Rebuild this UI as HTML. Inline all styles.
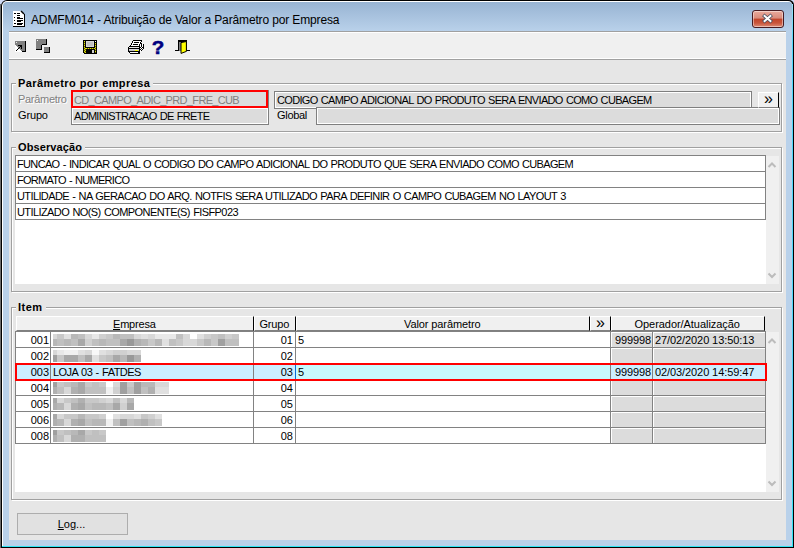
<!DOCTYPE html>
<html lang="pt-BR">
<head>
<meta charset="utf-8">
<title>ADMFM014 - Atribuição de Valor a Parâmetro por Empresa</title>
<style>
html,body{margin:0;padding:0;}
body{width:794px;height:548px;overflow:hidden;background:#d0dbf6;font-family:"Liberation Sans",sans-serif;font-size:11px;color:#000;position:relative;}
div{box-sizing:border-box;}
#win{position:absolute;left:0;top:0;width:794px;height:548px;overflow:hidden;}
#frame{position:absolute;left:1px;top:0;width:793px;height:548px;background:#000;border-radius:6px 5px 0 0;}
#frame2{position:absolute;left:2px;top:1px;width:790px;height:546px;background:#fff;border-radius:5px 4px 0 0;}
#frame3{position:absolute;left:3px;top:2px;width:789px;height:544px;border-radius:4px 3px 0 0;background:linear-gradient(to bottom,#98b4d3 0px,#b9d1ea 29px,#b9d1ea 100%);}
#cy-r{position:absolute;left:792px;top:4px;width:1px;height:543px;background:linear-gradient(to bottom,#9ee2f8 0,#4fd8fb 40px,#4fd8fb 400px,#2ee4f4 100%);}
#cy-b{position:absolute;left:2px;top:546px;width:791px;height:1px;background:#2ee4f4;}
#lgray{position:absolute;left:0;top:4px;width:1px;height:544px;background:#6c6c6c;}
#title{position:absolute;left:31px;top:12px;font-size:12px;line-height:16px;white-space:nowrap;color:#000;letter-spacing:-0.14px;}
#close{position:absolute;left:752px;top:10px;width:32px;height:18px;border:1px solid #471b21;border-radius:3px;background:linear-gradient(to bottom,#e9aa9c 0%,#d98b7b 45%,#c1442a 50%,#c9553b 75%,#dc8b76 100%);box-shadow:inset 0 0 0 1px rgba(255,255,255,.45);}
#client{position:absolute;left:9px;top:31px;width:777px;height:509px;background:#e6e6e6;}
#tb{position:absolute;left:0;top:0;width:777px;height:29px;background:#f0f0f0;border-top:1px solid #a0a0a0;border-bottom:1px solid #a0a0a0;}
#tb:before{content:"";position:absolute;left:0;top:0;width:100%;height:1px;background:#fff;}
#tb:after{content:"";position:absolute;left:0;bottom:0;width:100%;height:1px;background:#fff;}
.gb{position:absolute;border:1px solid #a0a0a0;box-shadow:inset 1px 1px 0 #fff,1px 1px 0 #fff;}
.gbt{position:absolute;padding:0 0 0 2px;background:#e6e6e6;font-weight:bold;font-size:11px;line-height:13px;white-space:nowrap;}
.lbl{position:absolute;white-space:nowrap;line-height:13px;font-size:11px;}
.fld{position:absolute;background:#dcdcdc;border:1px solid #7f7f7f;white-space:nowrap;line-height:13px;font-size:11px;overflow:hidden;box-shadow:inset 0 0 0 1px #fff;}
.fld span{position:absolute;left:2px;top:2px;}
.red{position:absolute;border:2px solid #f00;}
svg{position:absolute;overflow:visible;}
#q{position:absolute;left:152px;top:37px;width:12px;text-align:center;font-weight:bold;font-size:19px;line-height:22px;color:#000080;-webkit-text-stroke:0.5px #000080;transform:scaleX(1.08);}
.dis{color:#808080;text-shadow:1px 1px 0 #fff;}
.btn3d{position:absolute;background:#f0f0f0;border:1px solid;border-color:#fff #000 #808080 #fff;text-align:center;}
.btn3d span{position:absolute;left:0;right:0;top:-2px;font-size:16px;line-height:16px;}
.white{position:absolute;background:#fff;}
.sb{position:absolute;background:#f0f0f0;}
.orow{position:absolute;border:1px solid #828282;background:#fff;white-space:nowrap;line-height:13px;}
.orow span{position:absolute;left:1px;top:2px;}
.hd{position:absolute;background:#f0f0f0;border:1px solid;border-color:#fff #000 #808080 #fff;text-align:center;white-space:nowrap;line-height:13px;}
.hd span{position:absolute;top:1px;}
.hd.ch span{font-size:16px;line-height:16px;top:-2px;left:0;right:0;}
.row{position:absolute;left:15px;width:751px;height:17px;border:1px solid #828282;background:#fff;}
.row .c{position:absolute;top:0;height:15px;white-space:nowrap;line-height:13px;border-left:1px solid #828282;}
.row .c span{position:absolute;top:2px;}
.row .c i{position:absolute;display:block;}
.c1{left:-1px;width:36px;border-left:none !important;}
.c1 span{right:2px;}
.c2{left:34px;width:204px;}
.c2 span{left:2px;}
.c3{left:237px;width:43px;}
.c3 span{right:3px;}
.c4{left:279px;width:316px;}
.c4 span{left:2px;}
.c5{left:594px;width:43px;background:#dcdcdc;box-shadow:inset 1px 1px 0 #fff;}
.c5 span{left:4px;}
.c6{left:636px;width:113px;background:#dcdcdc;box-shadow:inset 1px 1px 0 #fff;}
.c6 span{left:2px;}
.row.sel{background:#cceeff;}
.row.sel .c4{background:#c8f9fd;border-left-color:#0a6cd6;}
.row.sel .c5,.row.sel .c6{background:#cceeff;box-shadow:none;}
#redrow{position:absolute;left:15px;top:363px;width:752px;height:18px;border:2px solid #f00;}
#logbtn{position:absolute;left:17px;top:513px;width:111px;height:22px;border:1px solid #adadad;background:#e1e1e1;text-align:center;line-height:13px;}
#logbtn span{position:absolute;left:0;right:2px;top:4px;font-size:11px;}
</style>
</head>
<body>
<div id="win">
<div id="frame"></div><div id="frame2"></div><div id="frame3"></div>
<div id="lgray"></div><div id="cy-r"></div><div id="cy-b"></div>
<div id="title">ADMFM014 - Atribuição de Valor a Parâmetro por Empresa</div>
<div id="close"></div>
<div id="client"><div id="tb"></div></div>
<svg id="ticon" style="left:13px;top:11px" width="12" height="16" shape-rendering="crispEdges"><path d="M0 0H8L11 3V15H0Z" fill="#fff"/><path d="M8 0L11 3" stroke="#000" stroke-width="1.4" shape-rendering="auto"/><rect x="11" y="3" width="1" height="13" fill="#000"/><rect x="0" y="15" width="12" height="1" fill="#000"/><rect x="1" y="2" width="2" height="1" fill="#000"/><rect x="4" y="2" width="3" height="1" fill="#000"/><rect x="4" y="4" width="3" height="1" fill="#000"/><rect x="1" y="6" width="1" height="1" fill="#000"/><rect x="4" y="6" width="3" height="1" fill="#000"/><rect x="4" y="7" width="6" height="1" fill="#000"/><rect x="1" y="9" width="1" height="1" fill="#000"/><rect x="4" y="9" width="6" height="1" fill="#000"/><rect x="4" y="10" width="4" height="1" fill="#000"/><rect x="1" y="12" width="2" height="1" fill="#000"/><rect x="4" y="12" width="6" height="1" fill="#000"/><rect x="4" y="13" width="5" height="1" fill="#000"/></svg>
<svg style="left:762px;top:14px" width="11" height="9"><path d="M2.6 2L8.4 7M8.4 2L2.6 7" stroke="#4a4f60" stroke-width="3.6" stroke-linecap="square"/><path d="M2.6 2L8.4 7M8.4 2L2.6 7" stroke="#fff" stroke-width="2" stroke-linecap="square"/></svg>
<svg style="left:15px;top:41px" width="12" height="12" shape-rendering="crispEdges"><rect x="0" y="0" width="11" height="11" fill="#808080"/><rect x="10" y="0" width="1" height="11" fill="#000"/><rect x="3" y="10" width="8" height="1" fill="#000"/><path d="M0 4L7 11H0Z" fill="#fff"/><rect x="1" y="1" width="1" height="1" fill="#e8e8e8"/><rect x="3" y="4" width="4" height="1" fill="#000"/><rect x="6" y="4" width="1" height="4" fill="#000"/><rect x="5" y="5" width="1" height="1" fill="#000"/><rect x="4" y="6" width="1" height="1" fill="#000"/><rect x="3" y="7" width="1" height="1" fill="#000"/><rect x="2" y="8" width="1" height="1" fill="#000"/><rect x="1" y="9" width="1" height="1" fill="#000"/></svg>
<svg style="left:36px;top:39px" width="16" height="15" shape-rendering="crispEdges"><path d="M0 0H11V6H6V11H0Z" fill="#808080"/><rect x="10" y="0" width="1" height="6" fill="#000"/><rect x="6" y="5" width="5" height="1" fill="#000"/><rect x="5" y="6" width="1" height="5" fill="#000"/><rect x="0" y="10" width="6" height="1" fill="#000"/><rect x="1" y="1" width="1" height="1" fill="#fff"/><rect x="8" y="8" width="6" height="6" fill="#808080"/><rect x="13" y="8" width="1" height="6" fill="#000"/><rect x="8" y="13" width="6" height="1" fill="#000"/></svg>
<svg style="left:83px;top:40px" width="14" height="14" shape-rendering="crispEdges"><path d="M0 0H14V14H1L0 13Z" fill="#000"/><rect x="1" y="1" width="1" height="12" fill="#5c5c00"/><rect x="12" y="3" width="1" height="10" fill="#5c5c00"/><rect x="2" y="8" width="10" height="1" fill="#5c5c00"/><rect x="2" y="8" width="1" height="5" fill="#5c5c00"/><rect x="1" y="1" width="1" height="1" fill="#e0e000"/><rect x="1" y="3" width="1" height="1" fill="#e0e000"/><rect x="1" y="5" width="1" height="1" fill="#e0e000"/><rect x="1" y="7" width="1" height="1" fill="#e0e000"/><rect x="1" y="9" width="1" height="1" fill="#e0e000"/><rect x="1" y="11" width="1" height="1" fill="#e0e000"/><rect x="12" y="3" width="1" height="1" fill="#e0e000"/><rect x="12" y="5" width="1" height="1" fill="#e0e000"/><rect x="12" y="7" width="1" height="1" fill="#e0e000"/><rect x="12" y="9" width="1" height="1" fill="#e0e000"/><rect x="12" y="11" width="1" height="1" fill="#e0e000"/><rect x="3" y="8" width="1" height="1" fill="#e0e000"/><rect x="5" y="8" width="1" height="1" fill="#e0e000"/><rect x="7" y="8" width="1" height="1" fill="#e0e000"/><rect x="9" y="8" width="1" height="1" fill="#e0e000"/><rect x="11" y="8" width="1" height="1" fill="#e0e000"/><rect x="2" y="8" width="1" height="1" fill="#e0e000"/><rect x="2" y="10" width="1" height="1" fill="#e0e000"/><rect x="2" y="12" width="1" height="1" fill="#e0e000"/><rect x="3" y="1" width="8" height="6" fill="#c0c0c0"/><rect x="3" y="1" width="8" height="1" fill="#d6d6d6"/><rect x="3" y="1" width="1" height="6" fill="#d6d6d6"/><rect x="10" y="1" width="1" height="6" fill="#d6d6d6"/><rect x="3" y="6" width="8" height="1" fill="#d6d6d6"/><rect x="12" y="1" width="1" height="1" fill="#fff"/><rect x="9" y="10" width="2" height="3" fill="#d0d0d0"/></svg>
<svg style="left:128px;top:40px" width="16" height="14" shape-rendering="crispEdges"><rect x="5" y="0" width="9" height="1" fill="#000"/><rect x="4" y="1" width="1" height="1" fill="#000"/><rect x="5" y="1" width="8" height="1" fill="#fff"/><rect x="13" y="1" width="1" height="1" fill="#000"/><rect x="4" y="2" width="1" height="1" fill="#000"/><rect x="5" y="2" width="1" height="1" fill="#fff"/><rect x="6" y="2" width="5" height="1" fill="#000"/><rect x="11" y="2" width="1" height="1" fill="#fff"/><rect x="12" y="2" width="1" height="1" fill="#000"/><rect x="3" y="3" width="1" height="1" fill="#000"/><rect x="4" y="3" width="8" height="1" fill="#fff"/><rect x="12" y="3" width="2" height="1" fill="#000"/><rect x="14" y="3" width="1" height="1" fill="#fff"/><rect x="3" y="4" width="1" height="1" fill="#000"/><rect x="4" y="4" width="1" height="1" fill="#fff"/><rect x="5" y="4" width="5" height="1" fill="#000"/><rect x="10" y="4" width="1" height="1" fill="#fff"/><rect x="11" y="4" width="1" height="1" fill="#000"/><rect x="12" y="4" width="1" height="1" fill="#fff"/><rect x="13" y="4" width="1" height="1" fill="#000"/><rect x="14" y="4" width="1" height="1" fill="#fff"/><rect x="15" y="4" width="1" height="1" fill="#000"/><rect x="2" y="5" width="1" height="1" fill="#000"/><rect x="3" y="5" width="8" height="1" fill="#fff"/><rect x="11" y="5" width="1" height="1" fill="#000"/><rect x="12" y="5" width="1" height="1" fill="#fff"/><rect x="13" y="5" width="1" height="1" fill="#000"/><rect x="14" y="5" width="1" height="1" fill="#fff"/><rect x="15" y="5" width="1" height="1" fill="#000"/><rect x="1" y="6" width="11" height="1" fill="#000"/><rect x="12" y="6" width="1" height="1" fill="#fff"/><rect x="13" y="6" width="1" height="1" fill="#000"/><rect x="14" y="6" width="1" height="1" fill="#fff"/><rect x="15" y="6" width="1" height="1" fill="#000"/><rect x="0" y="7" width="1" height="1" fill="#000"/><rect x="1" y="7" width="10" height="1" fill="#e6e6e6"/><rect x="11" y="7" width="2" height="1" fill="#000"/><rect x="13" y="7" width="1" height="1" fill="#fff"/><rect x="14" y="7" width="2" height="1" fill="#000"/><rect x="0" y="8" width="12" height="1" fill="#000"/><rect x="12" y="8" width="1" height="1" fill="#fff"/><rect x="13" y="8" width="1" height="1" fill="#000"/><rect x="14" y="8" width="1" height="1" fill="#fff"/><rect x="15" y="8" width="1" height="1" fill="#000"/><rect x="0" y="9" width="1" height="1" fill="#000"/><rect x="1" y="9" width="10" height="1" fill="#d8d8e0"/><rect x="11" y="9" width="2" height="1" fill="#000"/><rect x="13" y="9" width="1" height="1" fill="#fff"/><rect x="14" y="9" width="1" height="1" fill="#000"/><rect x="0" y="10" width="1" height="1" fill="#000"/><rect x="1" y="10" width="6" height="1" fill="#c0c0c0"/><rect x="7" y="10" width="3" height="1" fill="#ffff00"/><rect x="10" y="10" width="1" height="1" fill="#c0c0c0"/><rect x="11" y="10" width="1" height="1" fill="#000"/><rect x="12" y="10" width="1" height="1" fill="#fff"/><rect x="13" y="10" width="1" height="1" fill="#000"/><rect x="0" y="11" width="12" height="1" fill="#000"/><rect x="12" y="11" width="1" height="1" fill="#fff"/><rect x="1" y="12" width="1" height="1" fill="#000"/><rect x="2" y="12" width="8" height="1" fill="#fff"/><rect x="10" y="12" width="2" height="1" fill="#000"/><rect x="2" y="13" width="10" height="1" fill="#000"/></svg>
<div id="q">?</div>
<svg style="left:175px;top:40px" width="16" height="15" shape-rendering="crispEdges"><rect x="3" y="0" width="9" height="1" fill="#000"/><rect x="3" y="0" width="1" height="11" fill="#000"/><rect x="11" y="0" width="1" height="11" fill="#000"/><rect x="0" y="10" width="4" height="1" fill="#000"/><rect x="11" y="10" width="4" height="1" fill="#000"/><rect x="4" y="1" width="2" height="10" fill="#808080"/><rect x="4" y="1" width="7" height="1" fill="#000"/><path d="M6 2.6L11.4 1.5V11.4L6 13.4Z" fill="#ffff00" stroke="#000" stroke-width="1" shape-rendering="auto"/></svg>
<div class="gb" style="left:11px;top:83px;width:771px;height:49px"></div><div class="gbt" style="left:16px;top:77px;width:137px;letter-spacing:0.42px">Parâmetro por empresa</div>
<div class="gb" style="left:11px;top:147px;width:771px;height:145px"></div><div class="gbt" style="left:16px;top:141px;width:69px;letter-spacing:0.1px">Observação</div>
<div class="gb" style="left:11px;top:307px;width:771px;height:193px"></div><div class="gbt" style="left:16px;top:301px;width:30px;letter-spacing:0.5px">Item</div>
<div class="lbl dis" style="left:18px;top:93px;letter-spacing:-0.3px">Parâmetro</div>
<div class="lbl" style="left:18px;top:109px;letter-spacing:-0.15px">Grupo</div>
<div class="lbl" style="left:277px;top:109px;letter-spacing:-0.3px">Global</div>
<div class="fld" style="left:274px;top:91px;width:478px;height:18px"><span style="letter-spacing:-0.67px;word-spacing:0.8px">CODIGO CAMPO ADICIONAL DO PRODUTO SERA ENVIADO COMO CUBAGEM</span></div>
<div class="fld" style="left:71px;top:90px;width:198px;height:18px;color:#808080"><span style="left:2px;top:3px;letter-spacing:-0.66px">CD_CAMPO_ADIC_PRD_FRE_CUB</span></div>
<div class="fld" style="left:71px;top:107px;width:198px;height:18px"><span style="top:2px;letter-spacing:-0.7px;word-spacing:0.8px">ADMINISTRACAO DE FRETE</span></div>
<div class="red" style="left:71px;top:90px;width:197px;height:18px"></div>
<div class="fld" style="left:316px;top:107px;width:464px;height:18px"></div>
<div class="btn3d" style="left:758px;top:92px;width:21px;height:16px"><span>»</span></div>
<div class="white" style="left:15px;top:155px;width:751px;height:129px"></div>
<div class="sb" style="left:766px;top:156px;width:13px;height:128px"></div>
<div class="orow" style="left:15px;top:155px;width:751px;height:17px"><span style="letter-spacing:-0.653px;word-spacing:0.8px">FUNCAO - INDICAR QUAL O CODIGO DO CAMPO ADICIONAL DO PRODUTO QUE SERA ENVIADO COMO CUBAGEM</span></div>
<div class="orow" style="left:15px;top:171px;width:751px;height:17px"><span style="letter-spacing:-0.724px;word-spacing:0.8px">FORMATO - NUMERICO</span></div>
<div class="orow" style="left:15px;top:187px;width:751px;height:17px"><span style="letter-spacing:-0.606px;word-spacing:0.8px">UTILIDADE - NA GERACAO DO ARQ. NOTFIS SERA UTILIZADO PARA DEFINIR O CAMPO CUBAGEM NO LAYOUT 3</span></div>
<div class="orow" style="left:15px;top:203px;width:751px;height:17px"><span style="letter-spacing:-0.585px;word-spacing:0.8px">UTILIZADO NO(S) COMPONENTE(S) FISFP023</span></div>
<svg style="left:768px;top:161px" width="8" height="8"><path d="M0.5 6L4 2.5L7.5 6" fill="none" stroke="#bcbcbc" stroke-width="2"/></svg>
<svg style="left:768px;top:272px" width="8" height="8"><path d="M0.5 1.5L4 5L7.5 1.5" fill="none" stroke="#bcbcbc" stroke-width="2"/></svg>
<div class="white" style="left:15px;top:331px;width:751px;height:161px"></div>
<div class="sb" style="left:766px;top:332px;width:13px;height:160px"></div>
<svg style="left:768px;top:337px" width="8" height="8"><path d="M0.5 6L4 2.5L7.5 6" fill="none" stroke="#bcbcbc" stroke-width="2"/></svg>
<svg style="left:768px;top:480px" width="8" height="8"><path d="M0.5 1.5L4 5L7.5 1.5" fill="none" stroke="#bcbcbc" stroke-width="2"/></svg>
<div class="hd " style="left:16px;top:316px;width:238px;height:15px"><span style="left:96px;letter-spacing:-0.2px"><u>E</u>mpresa</span></div>
<div class="hd " style="left:254px;top:316px;width:42px;height:15px"><span style="left:4.5px;letter-spacing:-0.2px">Grupo</span></div>
<div class="hd " style="left:296px;top:316px;width:294px;height:15px"><span style="left:107px;letter-spacing:-0.1px">Valor parâmetro</span></div>
<div class="hd ch" style="left:590px;top:316px;width:21px;height:15px"><span style="">»</span></div>
<div class="hd " style="left:611px;top:316px;width:154px;height:15px"><span style="left:22.5px;letter-spacing:-0.05px">Operador/Atualização</span></div>
<div class="row" style="top:331px"><div class="c c1"><span>001</span></div><div class="c c2"><span style="letter-spacing:-0.53px;word-spacing:0.8px"></span><i style="left:2px;top:2px;width:4px;height:5px;background:#d8d8d8"></i><i style="left:2px;top:7px;width:4px;height:7px;background:#b8b8b8"></i><i style="left:6px;top:2px;width:7px;height:5px;background:#c8c8c8"></i><i style="left:6px;top:7px;width:7px;height:7px;background:#c0c0c0"></i><i style="left:13px;top:2px;width:7px;height:5px;background:#e0e0e0"></i><i style="left:13px;top:7px;width:7px;height:7px;background:#b8b8b8"></i><i style="left:20px;top:2px;width:7px;height:5px;background:#b8b8b8"></i><i style="left:20px;top:7px;width:7px;height:7px;background:#c0c0c0"></i><i style="left:27px;top:2px;width:7px;height:5px;background:#c0c0c0"></i><i style="left:27px;top:7px;width:7px;height:7px;background:#a8a8a8"></i><i style="left:34px;top:2px;width:7px;height:5px;background:#d8d8d8"></i><i style="left:34px;top:7px;width:7px;height:7px;background:#d0d0d0"></i><i style="left:41px;top:2px;width:7px;height:5px;background:#e8e8e8"></i><i style="left:41px;top:7px;width:7px;height:7px;background:#c0c0c0"></i><i style="left:48px;top:2px;width:7px;height:5px;background:#d0d0d0"></i><i style="left:48px;top:7px;width:7px;height:7px;background:#b8b8b8"></i><i style="left:55px;top:2px;width:7px;height:5px;background:#c8c8c8"></i><i style="left:55px;top:7px;width:7px;height:7px;background:#c0c0c0"></i><i style="left:62px;top:2px;width:7px;height:5px;background:#b8b8b8"></i><i style="left:62px;top:7px;width:7px;height:7px;background:#c0c0c0"></i><i style="left:69px;top:2px;width:7px;height:5px;background:#c0c0c0"></i><i style="left:69px;top:7px;width:7px;height:7px;background:#a8a8a8"></i><i style="left:76px;top:2px;width:7px;height:5px;background:#c0c0c0"></i><i style="left:76px;top:7px;width:7px;height:7px;background:#989898"></i><i style="left:83px;top:2px;width:7px;height:5px;background:#d8d8d8"></i><i style="left:83px;top:7px;width:7px;height:7px;background:#b0b0b0"></i><i style="left:90px;top:2px;width:7px;height:5px;background:#e0e0e0"></i><i style="left:90px;top:7px;width:7px;height:7px;background:#b8b8b8"></i><i style="left:97px;top:2px;width:7px;height:5px;background:#d8d8d8"></i><i style="left:97px;top:7px;width:7px;height:7px;background:#c8c8c8"></i><i style="left:104px;top:2px;width:7px;height:5px;background:#e8e8e8"></i><i style="left:104px;top:7px;width:7px;height:7px;background:#b8b8b8"></i><i style="left:111px;top:2px;width:7px;height:5px;background:#e8e8e8"></i><i style="left:111px;top:7px;width:7px;height:7px;background:#e0e0e0"></i><i style="left:118px;top:2px;width:7px;height:5px;background:#e8e8e8"></i><i style="left:118px;top:7px;width:7px;height:7px;background:#c0c0c0"></i><i style="left:125px;top:2px;width:7px;height:5px;background:#c0c0c0"></i><i style="left:125px;top:7px;width:7px;height:7px;background:#c8c8c8"></i><i style="left:132px;top:2px;width:7px;height:5px;background:#d8d8d8"></i><i style="left:132px;top:7px;width:7px;height:7px;background:#d8d8d8"></i><i style="left:139px;top:2px;width:7px;height:5px;background:#ffffff"></i><i style="left:139px;top:7px;width:7px;height:7px;background:#d8d8d8"></i><i style="left:146px;top:2px;width:7px;height:5px;background:#e0e0e0"></i><i style="left:146px;top:7px;width:7px;height:7px;background:#c8c8c8"></i><i style="left:153px;top:2px;width:7px;height:5px;background:#d0d0d0"></i><i style="left:153px;top:7px;width:7px;height:7px;background:#b8b8b8"></i><i style="left:160px;top:2px;width:7px;height:5px;background:#c8c8c8"></i><i style="left:160px;top:7px;width:7px;height:7px;background:#c8c8c8"></i><i style="left:167px;top:2px;width:7px;height:5px;background:#c0c0c0"></i><i style="left:167px;top:7px;width:7px;height:7px;background:#a0a0a0"></i><i style="left:174px;top:2px;width:7px;height:5px;background:#d0d0d0"></i><i style="left:174px;top:7px;width:7px;height:7px;background:#c0c0c0"></i><i style="left:181px;top:2px;width:7px;height:5px;background:#c8c8c8"></i><i style="left:181px;top:7px;width:7px;height:7px;background:#c0c0c0"></i></div><div class="c c3"><span>01</span></div><div class="c c4"><span>5</span></div><div class="c c5"><span style="letter-spacing:-0.1px">999998</span></div><div class="c c6"><span style="letter-spacing:-0.09px">27/02/2020 13:50:13</span></div></div>
<div class="row" style="top:347px"><div class="c c1"><span>002</span></div><div class="c c2"><span style="letter-spacing:-0.53px;word-spacing:0.8px"></span><i style="left:2px;top:2px;width:4px;height:5px;background:#d8d8d8"></i><i style="left:2px;top:7px;width:4px;height:7px;background:#a0a0a0"></i><i style="left:6px;top:2px;width:7px;height:5px;background:#e8e8e8"></i><i style="left:6px;top:7px;width:7px;height:7px;background:#c8c8c8"></i><i style="left:13px;top:2px;width:7px;height:5px;background:#f0f0f0"></i><i style="left:13px;top:7px;width:7px;height:7px;background:#a8a8a8"></i><i style="left:20px;top:2px;width:7px;height:5px;background:#f0f0f0"></i><i style="left:20px;top:7px;width:7px;height:7px;background:#a8a8a8"></i><i style="left:27px;top:2px;width:7px;height:5px;background:#e0e0e0"></i><i style="left:27px;top:7px;width:7px;height:7px;background:#c0c0c0"></i><i style="left:34px;top:2px;width:7px;height:5px;background:#d8d8d8"></i><i style="left:34px;top:7px;width:7px;height:7px;background:#a8a8a8"></i><i style="left:41px;top:2px;width:7px;height:5px;background:#f8f8f8"></i><i style="left:41px;top:7px;width:7px;height:7px;background:#e0e0e0"></i><i style="left:48px;top:2px;width:7px;height:5px;background:#e0e0e0"></i><i style="left:48px;top:7px;width:7px;height:7px;background:#c8c8c8"></i><i style="left:55px;top:2px;width:7px;height:5px;background:#d8d8d8"></i><i style="left:55px;top:7px;width:7px;height:7px;background:#c0c0c0"></i><i style="left:62px;top:2px;width:7px;height:5px;background:#d0d0d0"></i><i style="left:62px;top:7px;width:7px;height:7px;background:#a8a8a8"></i><i style="left:69px;top:2px;width:7px;height:5px;background:#d0d0d0"></i><i style="left:69px;top:7px;width:7px;height:7px;background:#b8b8b8"></i><i style="left:76px;top:2px;width:7px;height:5px;background:#d8d8d8"></i><i style="left:76px;top:7px;width:7px;height:7px;background:#989898"></i><i style="left:83px;top:2px;width:7px;height:5px;background:#d8d8d8"></i><i style="left:83px;top:7px;width:7px;height:7px;background:#b0b0b0"></i></div><div class="c c3"><span>02</span></div><div class="c c4"><span></span></div><div class="c c5"><span style="letter-spacing:-0.1px"></span></div><div class="c c6"><span style="letter-spacing:-0.09px"></span></div></div>
<div class="row sel" style="top:363px"><div class="c c1"><span>003</span></div><div class="c c2"><span style="letter-spacing:-0.53px;word-spacing:0.8px">LOJA 03 - FATDES</span></div><div class="c c3"><span>03</span></div><div class="c c4"><span>5</span></div><div class="c c5"><span style="letter-spacing:-0.1px">999998</span></div><div class="c c6"><span style="letter-spacing:-0.09px">02/03/2020 14:59:47</span></div></div>
<div class="row" style="top:379px"><div class="c c1"><span>004</span></div><div class="c c2"><span style="letter-spacing:-0.53px;word-spacing:0.8px"></span><i style="left:2px;top:2px;width:4px;height:5px;background:#a0a0a0"></i><i style="left:2px;top:7px;width:4px;height:7px;background:#b0b0b0"></i><i style="left:6px;top:2px;width:7px;height:5px;background:#c8c8c8"></i><i style="left:6px;top:7px;width:7px;height:7px;background:#c0c0c0"></i><i style="left:13px;top:2px;width:7px;height:5px;background:#c0c0c0"></i><i style="left:13px;top:7px;width:7px;height:7px;background:#d8d8d8"></i><i style="left:20px;top:2px;width:7px;height:5px;background:#b8b8b8"></i><i style="left:20px;top:7px;width:7px;height:7px;background:#b0b0b0"></i><i style="left:27px;top:2px;width:7px;height:5px;background:#a8a8a8"></i><i style="left:27px;top:7px;width:7px;height:7px;background:#a8a8a8"></i><i style="left:34px;top:2px;width:7px;height:5px;background:#c8c8c8"></i><i style="left:34px;top:7px;width:7px;height:7px;background:#c0c0c0"></i><i style="left:41px;top:2px;width:7px;height:5px;background:#c0c0c0"></i><i style="left:41px;top:7px;width:7px;height:7px;background:#c0c0c0"></i><i style="left:48px;top:2px;width:7px;height:5px;background:#c8c8c8"></i><i style="left:48px;top:7px;width:7px;height:7px;background:#c0c0c0"></i><i style="left:55px;top:2px;width:7px;height:5px;background:#ffffff"></i><i style="left:55px;top:7px;width:7px;height:7px;background:#f0f0f0"></i><i style="left:62px;top:2px;width:7px;height:5px;background:#d8d8d8"></i><i style="left:62px;top:7px;width:7px;height:7px;background:#d0d0d0"></i><i style="left:69px;top:2px;width:7px;height:5px;background:#a0a0a0"></i><i style="left:69px;top:7px;width:7px;height:7px;background:#a0a0a0"></i><i style="left:76px;top:2px;width:7px;height:5px;background:#c8c8c8"></i><i style="left:76px;top:7px;width:7px;height:7px;background:#c0c0c0"></i><i style="left:83px;top:2px;width:7px;height:5px;background:#a0a0a0"></i><i style="left:83px;top:7px;width:7px;height:7px;background:#a0a0a0"></i><i style="left:90px;top:2px;width:7px;height:5px;background:#b8b8b8"></i><i style="left:90px;top:7px;width:7px;height:7px;background:#c0c0c0"></i><i style="left:97px;top:2px;width:7px;height:5px;background:#b8b8b8"></i><i style="left:97px;top:7px;width:7px;height:7px;background:#b0b0b0"></i><i style="left:104px;top:2px;width:7px;height:5px;background:#d8d8d8"></i><i style="left:104px;top:7px;width:7px;height:7px;background:#e0e0e0"></i><i style="left:111px;top:2px;width:7px;height:5px;background:#d8d8d8"></i><i style="left:111px;top:7px;width:7px;height:7px;background:#e0e0e0"></i></div><div class="c c3"><span>04</span></div><div class="c c4"><span></span></div><div class="c c5"><span style="letter-spacing:-0.1px"></span></div><div class="c c6"><span style="letter-spacing:-0.09px"></span></div></div>
<div class="row" style="top:395px"><div class="c c1"><span>005</span></div><div class="c c2"><span style="letter-spacing:-0.53px;word-spacing:0.8px"></span><i style="left:2px;top:2px;width:4px;height:5px;background:#a8a8a8"></i><i style="left:2px;top:7px;width:4px;height:7px;background:#b0b0b0"></i><i style="left:6px;top:2px;width:7px;height:5px;background:#d8d8d8"></i><i style="left:6px;top:7px;width:7px;height:7px;background:#b8b8b8"></i><i style="left:13px;top:2px;width:7px;height:5px;background:#c8c8c8"></i><i style="left:13px;top:7px;width:7px;height:7px;background:#d8d8d8"></i><i style="left:20px;top:2px;width:7px;height:5px;background:#c0c0c0"></i><i style="left:20px;top:7px;width:7px;height:7px;background:#b0b0b0"></i><i style="left:27px;top:2px;width:7px;height:5px;background:#b0b0b0"></i><i style="left:27px;top:7px;width:7px;height:7px;background:#a8a8a8"></i><i style="left:34px;top:2px;width:7px;height:5px;background:#c8c8c8"></i><i style="left:34px;top:7px;width:7px;height:7px;background:#c0c0c0"></i><i style="left:41px;top:2px;width:7px;height:5px;background:#c8c8c8"></i><i style="left:41px;top:7px;width:7px;height:7px;background:#b8b8b8"></i><i style="left:48px;top:2px;width:7px;height:5px;background:#d0d0d0"></i><i style="left:48px;top:7px;width:7px;height:7px;background:#b8b8b8"></i><i style="left:55px;top:2px;width:7px;height:5px;background:#d8d8d8"></i><i style="left:55px;top:7px;width:7px;height:7px;background:#c0c0c0"></i><i style="left:62px;top:2px;width:7px;height:5px;background:#c0c0c0"></i><i style="left:62px;top:7px;width:7px;height:7px;background:#a8a8a8"></i><i style="left:69px;top:2px;width:7px;height:5px;background:#d8d8d8"></i><i style="left:69px;top:7px;width:7px;height:7px;background:#d0d0d0"></i><i style="left:76px;top:2px;width:7px;height:5px;background:#b8b8b8"></i><i style="left:76px;top:7px;width:7px;height:7px;background:#a8a8a8"></i></div><div class="c c3"><span>05</span></div><div class="c c4"><span></span></div><div class="c c5"><span style="letter-spacing:-0.1px"></span></div><div class="c c6"><span style="letter-spacing:-0.09px"></span></div></div>
<div class="row" style="top:411px"><div class="c c1"><span>006</span></div><div class="c c2"><span style="letter-spacing:-0.53px;word-spacing:0.8px"></span><i style="left:2px;top:2px;width:4px;height:5px;background:#a8a8a8"></i><i style="left:2px;top:7px;width:4px;height:7px;background:#b0b0b0"></i><i style="left:6px;top:2px;width:7px;height:5px;background:#d8d8d8"></i><i style="left:6px;top:7px;width:7px;height:7px;background:#b8b8b8"></i><i style="left:13px;top:2px;width:7px;height:5px;background:#c8c8c8"></i><i style="left:13px;top:7px;width:7px;height:7px;background:#d8d8d8"></i><i style="left:20px;top:2px;width:7px;height:5px;background:#c8c8c8"></i><i style="left:20px;top:7px;width:7px;height:7px;background:#b0b0b0"></i><i style="left:27px;top:2px;width:7px;height:5px;background:#b8b8b8"></i><i style="left:27px;top:7px;width:7px;height:7px;background:#a8a8a8"></i><i style="left:34px;top:2px;width:7px;height:5px;background:#c8c8c8"></i><i style="left:34px;top:7px;width:7px;height:7px;background:#c0c0c0"></i><i style="left:41px;top:2px;width:7px;height:5px;background:#c8c8c8"></i><i style="left:41px;top:7px;width:7px;height:7px;background:#b8b8b8"></i><i style="left:48px;top:2px;width:7px;height:5px;background:#d0d0d0"></i><i style="left:48px;top:7px;width:7px;height:7px;background:#b8b8b8"></i><i style="left:55px;top:2px;width:7px;height:5px;background:#ffffff"></i><i style="left:55px;top:7px;width:7px;height:7px;background:#f0f0f0"></i><i style="left:62px;top:2px;width:7px;height:5px;background:#e0e0e0"></i><i style="left:62px;top:7px;width:7px;height:7px;background:#c0c0c0"></i><i style="left:69px;top:2px;width:7px;height:5px;background:#d8d8d8"></i><i style="left:69px;top:7px;width:7px;height:7px;background:#a0a0a0"></i><i style="left:76px;top:2px;width:7px;height:5px;background:#d8d8d8"></i><i style="left:76px;top:7px;width:7px;height:7px;background:#c0c0c0"></i><i style="left:83px;top:2px;width:7px;height:5px;background:#e0e0e0"></i><i style="left:83px;top:7px;width:7px;height:7px;background:#b8b8b8"></i><i style="left:90px;top:2px;width:7px;height:5px;background:#c8c8c8"></i><i style="left:90px;top:7px;width:7px;height:7px;background:#b0b0b0"></i><i style="left:97px;top:2px;width:7px;height:5px;background:#d0d0d0"></i><i style="left:97px;top:7px;width:7px;height:7px;background:#c0c0c0"></i><i style="left:104px;top:2px;width:7px;height:5px;background:#e0e0e0"></i><i style="left:104px;top:7px;width:7px;height:7px;background:#c8c8c8"></i></div><div class="c c3"><span>06</span></div><div class="c c4"><span></span></div><div class="c c5"><span style="letter-spacing:-0.1px"></span></div><div class="c c6"><span style="letter-spacing:-0.09px"></span></div></div>
<div class="row" style="top:427px"><div class="c c1"><span>008</span></div><div class="c c2"><span style="letter-spacing:-0.53px;word-spacing:0.8px"></span><i style="left:2px;top:2px;width:4px;height:5px;background:#a0a0a0"></i><i style="left:2px;top:7px;width:4px;height:7px;background:#b0b0b0"></i><i style="left:6px;top:2px;width:7px;height:5px;background:#c8c8c8"></i><i style="left:6px;top:7px;width:7px;height:7px;background:#c0c0c0"></i><i style="left:13px;top:2px;width:7px;height:5px;background:#c0c0c0"></i><i style="left:13px;top:7px;width:7px;height:7px;background:#d8d8d8"></i><i style="left:20px;top:2px;width:7px;height:5px;background:#b8b8b8"></i><i style="left:20px;top:7px;width:7px;height:7px;background:#b0b0b0"></i><i style="left:27px;top:2px;width:7px;height:5px;background:#a8a8a8"></i><i style="left:27px;top:7px;width:7px;height:7px;background:#b0b0b0"></i><i style="left:34px;top:2px;width:7px;height:5px;background:#c8c8c8"></i><i style="left:34px;top:7px;width:7px;height:7px;background:#c0c0c0"></i><i style="left:41px;top:2px;width:7px;height:5px;background:#c0c0c0"></i><i style="left:41px;top:7px;width:7px;height:7px;background:#c0c0c0"></i><i style="left:48px;top:2px;width:7px;height:5px;background:#c8c8c8"></i><i style="left:48px;top:7px;width:7px;height:7px;background:#c0c0c0"></i></div><div class="c c3"><span>08</span></div><div class="c c4"><span></span></div><div class="c c5"><span style="letter-spacing:-0.1px"></span></div><div class="c c6"><span style="letter-spacing:-0.09px"></span></div></div>
<div id="redrow"></div>
<div id="logbtn"><span><u>L</u>og...</span></div>
</div>
</body>
</html>
